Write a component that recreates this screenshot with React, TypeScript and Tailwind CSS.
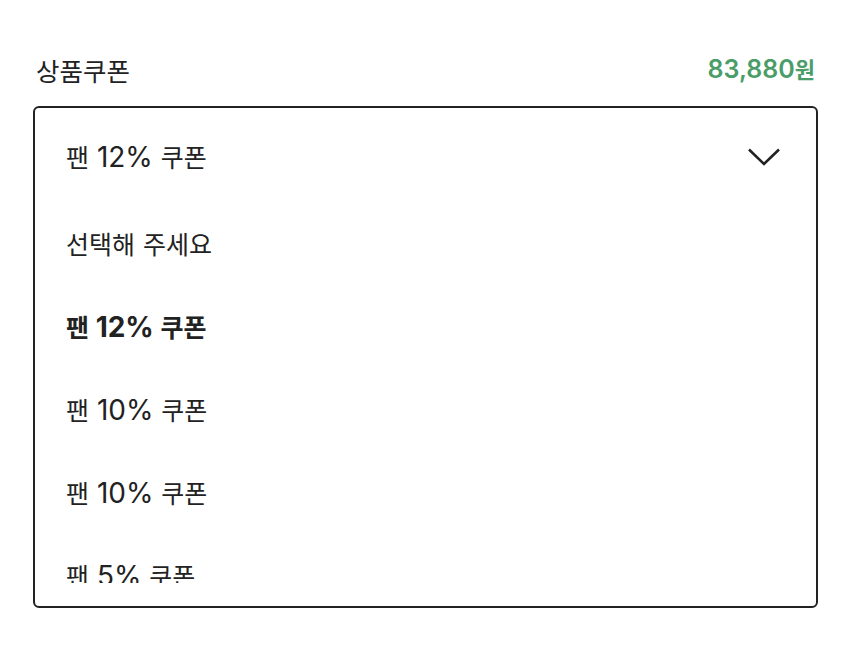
import React from "react";

const options = [
  { label: "선택해 주세요", bold: false },
  { label: "팬 12% 쿠폰", bold: true },
  { label: "팬 10% 쿠폰", bold: false },
  { label: "팬 10% 쿠폰", bold: false },
  { label: "팬 5% 쿠폰", bold: false },
];

const KR = '"Noto Sans CJK KR", "Noto Sans", sans-serif';
const LAT = 'Inter, "Noto Sans CJK KR", sans-serif';

function Mixed({ text, latinCls, hangulCls }: { text: string; latinCls: string; hangulCls: string }) {
  const parts = text.split(/([가-힣]+)/).filter((p) => p.length > 0);
  return (
    <span className="leading-none whitespace-pre">
      {parts.map((p, i) =>
        /[가-힣]/.test(p) ? (
          <span key={i} className={hangulCls} style={{ fontFamily: KR }}>
            {p}
          </span>
        ) : (
          <span key={i} className={latinCls} style={{ fontFamily: LAT }}>
            {p}
          </span>
        )
      )}
    </span>
  );
}

export default function App() {
  return (
    <div className="w-[850px] h-[663px] bg-white px-8 pt-[52px] text-[#222]" style={{ fontFamily: KR }}>
      <div className="flex h-9 items-center justify-between pl-[4px] pr-[3px] mb-[18px]">
        <span className="text-[25.5px] leading-none">상품쿠폰</span>
        <span className="text-[#4a9d68] font-semibold">
          <Mixed text="83,880원" latinCls="text-[25px] leading-none" hangulCls="text-[22px] leading-none" />
        </span>
      </div>
      <div className="ml-px h-[502px] rounded-md border-2 border-[#222] flex flex-col">
        <div className="flex h-[94px] shrink-0 items-center justify-between pl-[31px] pr-[36px] pt-1">
          <Mixed text="팬 12% 쿠폰" latinCls="text-[28px] leading-none" hangulCls="text-[25px] leading-none" />
          <svg width="32" height="18" viewBox="0 0 32 18" fill="none">
            <path d="M1 1.5 L16 16 L31 1.5" stroke="#222" strokeWidth="2.6" />
          </svg>
        </div>
        <div className="h-[381px] shrink-0 overflow-hidden">
          {options.map((o, i) => (
            <div key={i} className={`flex h-[83px] items-center pl-[31px] ${o.bold ? "font-bold" : ""}`}>
              <Mixed text={o.label} latinCls="text-[28px] leading-none" hangulCls="text-[25px] leading-none" />
            </div>
          ))}
        </div>
      </div>
    </div>
  );
}
